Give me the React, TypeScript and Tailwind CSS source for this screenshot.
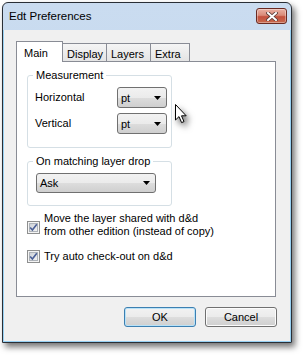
import React from 'react';

const font = { fontFamily: '"Liberation Sans", Arial, sans-serif' };

const Arrow = () => (
  <svg width="7" height="4" viewBox="0 0 7 4" className="block">
    <path d="M0 0H7L3.5 4Z" fill="#000" />
  </svg>
);

const Combo: React.FC<{ value: string; className: string }> = ({ value, className }) => (
  <div
    className={`flex items-center justify-between rounded-[3px] border border-[#707070] bg-[linear-gradient(#f2f2f2_0%,#ebebeb_50%,#dddddd_51%,#cfcfcf_100%)] pl-[3px] pr-[5px] text-[11px] text-black ${className}`}
  >
    <span className="leading-none pt-[1px]">{value}</span>
    <Arrow />
  </div>
);

const CheckBox = () => (
  <svg width="13" height="13" viewBox="0 0 13 13" className="block shrink-0">
    <defs>
      <linearGradient id="cbg" x1="0" y1="0" x2="1" y2="1">
        <stop offset="0" stopColor="#cbcfd5" />
        <stop offset="1" stopColor="#f6f6f6" />
      </linearGradient>
    </defs>
    <rect x="0.5" y="0.5" width="12" height="12" fill="#f4f4f4" stroke="#8e8f8f" />
    <rect x="2.5" y="2.5" width="8" height="8" fill="url(#cbg)" stroke="#aeb3b9" />
    <path d="M3.2 6.4 L5.4 9 L9.8 3.2" fill="none" stroke="#4a5f97" strokeWidth="1.6" />
  </svg>
);

const Cursor = () => (
  <svg
    width="14"
    height="22"
    viewBox="0 0 14 22"
    className="absolute left-[174px] top-[103px] drop-shadow-[3px_4px_3px_rgba(0,0,0,0.55)]"
  >
    <path
      d="M1.5 1.5 V17 L5 13.6 L7.6 19.6 L10 18.6 L7.5 12.8 H12.2 Z"
      fill="#fff"
      stroke="#000"
      strokeWidth="1"
      strokeLinejoin="miter"
    />
  </svg>
);

export default function App() {
  return (
    <div className="relative h-[357px] w-[306px] bg-white pl-[2px] pt-[2px]" style={font}>
      {/* window */}
      <div className="flex h-[341px] w-[290px] flex-col rounded-t-[6px] border border-[#2a2f36] bg-[linear-gradient(#cadcf0,#bfd3ea)] shadow-[3px_4px_6px_rgba(0,0,0,0.55)]">
        {/* title bar */}
        <div className="flex h-[27px] shrink-0 items-start justify-between pl-[6px] pr-[4px]">
          <span className="mt-[6px] text-[11.5px] leading-[14px] text-black">Edt Preferences</span>
          <div className="mt-[5px] flex h-[16px] w-[31px] items-center justify-center rounded-[3px] border border-[#6a2a22] bg-[linear-gradient(#eab1a4_0%,#d98a78_45%,#c4503d_55%,#c76a4f_100%)] shadow-[inset_0_0_0_1px_rgba(255,255,255,0.35)]">
            <svg width="12" height="9" viewBox="0 0 12 9">
              <path
                d="M2 1 L10 8 M10 1 L2 8"
                stroke="#5a3a36"
                strokeWidth="3.6"
                strokeLinecap="square"
              />
              <path d="M2 1 L10 8 M10 1 L2 8" stroke="#fff" strokeWidth="2" strokeLinecap="square" />
            </svg>
          </div>
        </div>

        {/* client area */}
        <div className="flex flex-1 flex-col border-x border-b border-[#98d1f3] bg-[#f0f0f0] px-[12px] pt-[11px]">
          {/* tabs */}
          <div className="flex h-[20px] items-end text-[11px] text-black">
            <div className="relative z-10 -mb-px flex h-[21px] w-[47px] items-start border border-b-0 border-[#898c95] bg-white pl-[7px] pt-[3px]">
              Main
            </div>
            {[
              ['Display', 'w-[44px]'],
              ['Layers', 'w-[44px]'],
              ['Extra', 'w-[39px]'],
            ].map(([t, w]) => (
              <div
                key={t}
                className={`flex h-[18px] ${w} items-start border-r border-t border-[#898c95] bg-[linear-gradient(#f5f5f5,#e4e4e4)] pl-[4px] pt-[2px]`}
              >
                {t}
              </div>
            ))}
          </div>

          {/* panel */}
          <div className="h-[236px] w-[260px] border border-[#898c95] bg-white pl-[10px] pt-[6px] text-[11px] text-black">
            <fieldset className="w-[145px] rounded-[3px] border border-[#d5dfe5] pb-[13px] pl-[5px]">
              <legend className="px-[3px] leading-[14px]">Measurement</legend>
              <div className="ml-[2px] mt-[5px] grid grid-cols-[82px_50px] items-center gap-y-[5px]">
                <span>Horizontal</span>
                <Combo value="pt" className="h-[21px] w-[50px]" />
                <span>Vertical</span>
                <Combo value="pt" className="h-[21px] w-[50px]" />
              </div>
            </fieldset>

            <fieldset className="mt-[6px] w-[145px] rounded-[3px] border border-[#d5dfe5] pb-[12px] pl-[5px]">
              <legend className="px-[3px] leading-[14px]">On matching layer drop</legend>
              <Combo value="Ask" className="ml-[3px] mt-[5px] h-[20px] w-[120px]" />
            </fieldset>

            <div className="mt-[6px] flex items-start gap-[4px]">
              <div className="mt-[9px]">
                <CheckBox />
              </div>
              <span className="leading-[13px]">
                Move the layer shared with d&amp;d
                <br />
                from other edition (instead of copy)
              </span>
            </div>

            <div className="mt-[12px] flex items-center gap-[4px]">
              <CheckBox />
              <span className="leading-[13px]">Try auto check-out on d&amp;d</span>
            </div>
          </div>

          {/* buttons */}
          <div className="mr-[1px] mt-[10px] flex justify-end gap-[9px] text-[11px] text-black">
            <button className="flex h-[20px] w-[72px] items-center justify-center rounded-[3px] border border-[#3c7fb1] bg-[linear-gradient(#f2f2f2_0%,#ebebeb_50%,#dddddd_51%,#cfcfcf_100%)] shadow-[inset_0_0_0_1px_#b8e2f8]">
              OK
            </button>
            <button className="flex h-[20px] w-[72px] items-center justify-center rounded-[3px] border border-[#707070] bg-[linear-gradient(#f2f2f2_0%,#ebebeb_50%,#dddddd_51%,#cfcfcf_100%)] shadow-[inset_0_0_0_1px_#fcfcfc]">
              Cancel
            </button>
          </div>
        </div>
      </div>

      <Cursor />
    </div>
  );
}
